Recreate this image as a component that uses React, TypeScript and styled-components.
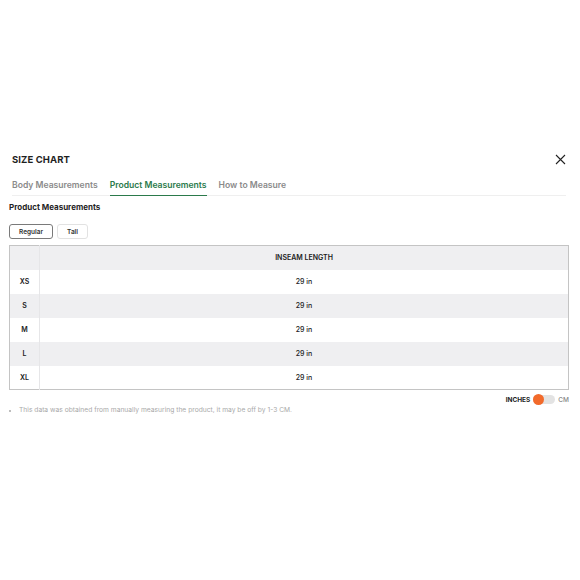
import React, { useState } from "react";
import styled, { createGlobalStyle } from "styled-components";

const GlobalStyle = createGlobalStyle`
  html, body {
    margin: 0;
    padding: 0;
    background: #ffffff;
    font-family: Inter, "Open Sans", sans-serif;
  }
`;

const Page = styled.div`
  width: 580px;
  height: 580px;
  box-sizing: border-box;
  padding: 152px 11px 0 9px;
  color: #1f1f1f;
`;

const Header = styled.div`
  display: flex;
  justify-content: space-between;
  align-items: center;
  padding: 0 3px;
  height: 15px;
`;

const Title = styled.h2`
  margin: 0;
  font-size: 9.5px;
  font-weight: 700;
  letter-spacing: 0.1px;
`;

const Close = styled.button`
  border: none;
  background: none;
  padding: 0;
  width: 11px;
  height: 11px;
  display: flex;
  cursor: pointer;
`;

const Tabs = styled.div`
  display: flex;
  gap: 12px;
  margin: 9px 3px 0;
  border-bottom: 1px solid #efefef;
`;

const Tab = styled.div<{ $active?: boolean }>`
  font-size: 8.6px;
  font-weight: 600;
  line-height: 12px;
  padding: 3px 0 4px;
  color: ${(p) => (p.$active ? "#2b7a4b" : "#8a8a8a")};
  border-bottom: 1px solid ${(p) => (p.$active ? "#2b7a4b" : "transparent")};
  margin-bottom: -1px;
`;

const Heading = styled.h3`
  margin: 6px 0 0;
  font-size: 8px;
  font-weight: 700;
  line-height: 10px;
`;

const Options = styled.div`
  display: flex;
  gap: 4px;
  margin-top: 12px;
`;

const Option = styled.button<{ $selected?: boolean }>`
  height: 15px;
  padding: 0 9px;
  font-family: inherit;
  font-size: 6.5px;
  font-weight: 600;
  color: #333;
  background: #fff;
  border: 1px solid ${(p) => (p.$selected ? "#7a7a7a" : "#e2e2e2")};
  border-radius: 3px;
  cursor: pointer;
`;

const Table = styled.table`
  width: 100%;
  margin-top: 6px;
  border-collapse: collapse;
  border: 1px solid #c4c4c4;
  font-size: 7px;
  font-weight: 600;
  color: #222;
`;

const Row = styled.tr<{ $shaded?: boolean }>`
  height: 24px;
  background: ${(p) => (p.$shaded ? "#efeff1" : "#ffffff")};
`;

const SizeCell = styled.td`
  width: 29px;
  text-align: center;
  border-right: 1px solid #e6e6e8;
  padding: 0;
`;

const ValueCell = styled.td`
  text-align: center;
  padding: 0;
  font-weight: 500;
`;

const HeadCell = styled.th`
  text-align: center;
  font-weight: 600;
  padding: 0;
`;

const UnitRow = styled.div`
  display: flex;
  justify-content: flex-end;
  align-items: center;
  gap: 3px;
  margin-top: 5px;
  font-size: 6.5px;
  font-weight: 700;
`;

const Unit = styled.span<{ $active?: boolean }>`
  color: ${(p) => (p.$active ? "#222" : "#888")};
  font-weight: ${(p) => (p.$active ? 700 : 500)};
`;

const Track = styled.button<{ $on: boolean }>`
  position: relative;
  width: 22px;
  height: 9px;
  border: none;
  border-radius: 5px;
  background: #e3e3e3;
  padding: 0;
  cursor: pointer;
`;

const Knob = styled.span<{ $on: boolean }>`
  position: absolute;
  top: -1px;
  left: ${(p) => (p.$on ? "0" : "11px")};
  width: 11px;
  height: 11px;
  border-radius: 50%;
  background: #f26a2b;
`;

const Notes = styled.ul`
  margin: 2px 0 0;
  padding-left: 10px;
  font-size: 6.7px;
  color: #a9a9a9;
  li::marker {
    font-size: 5px;
  }
`;

const sizes = ["XS", "S", "M", "L", "XL"];

export default function App() {
  const [inches, setInches] = useState(true);
  const [fit, setFit] = useState("Regular");

  return (
    <>
      <GlobalStyle />
      <Page>
        <Header>
          <Title>SIZE CHART</Title>
          <Close aria-label="close">
            <svg width="11" height="11" viewBox="0 0 11 11">
              <path d="M1 1L10 10M10 1L1 10" stroke="#222" strokeWidth="1.1" />
            </svg>
          </Close>
        </Header>
        <Tabs>
          <Tab>Body Measurements</Tab>
          <Tab $active>Product Measurements</Tab>
          <Tab>How to Measure</Tab>
        </Tabs>
        <Heading>Product Measurements</Heading>
        <Options>
          {["Regular", "Tall"].map((f) => (
            <Option key={f} $selected={fit === f} onClick={() => setFit(f)}>
              {f}
            </Option>
          ))}
        </Options>
        <Table>
          <thead>
            <Row $shaded>
              <SizeCell as="th" />
              <HeadCell>INSEAM LENGTH</HeadCell>
            </Row>
          </thead>
          <tbody>
            {sizes.map((s, i) => (
              <Row key={s} $shaded={i % 2 === 1}>
                <SizeCell>{s}</SizeCell>
                <ValueCell>{inches ? "29 in" : "74 cm"}</ValueCell>
              </Row>
            ))}
          </tbody>
        </Table>
        <UnitRow>
          <Unit $active={inches}>INCHES</Unit>
          <Track $on={inches} onClick={() => setInches(!inches)}>
            <Knob $on={inches} />
          </Track>
          <Unit $active={!inches}>CM</Unit>
        </UnitRow>
        <Notes>
          <li>This data was obtained from manually measuring the product, it may be off by 1-3 CM.</li>
        </Notes>
      </Page>
    </>
  );
}
